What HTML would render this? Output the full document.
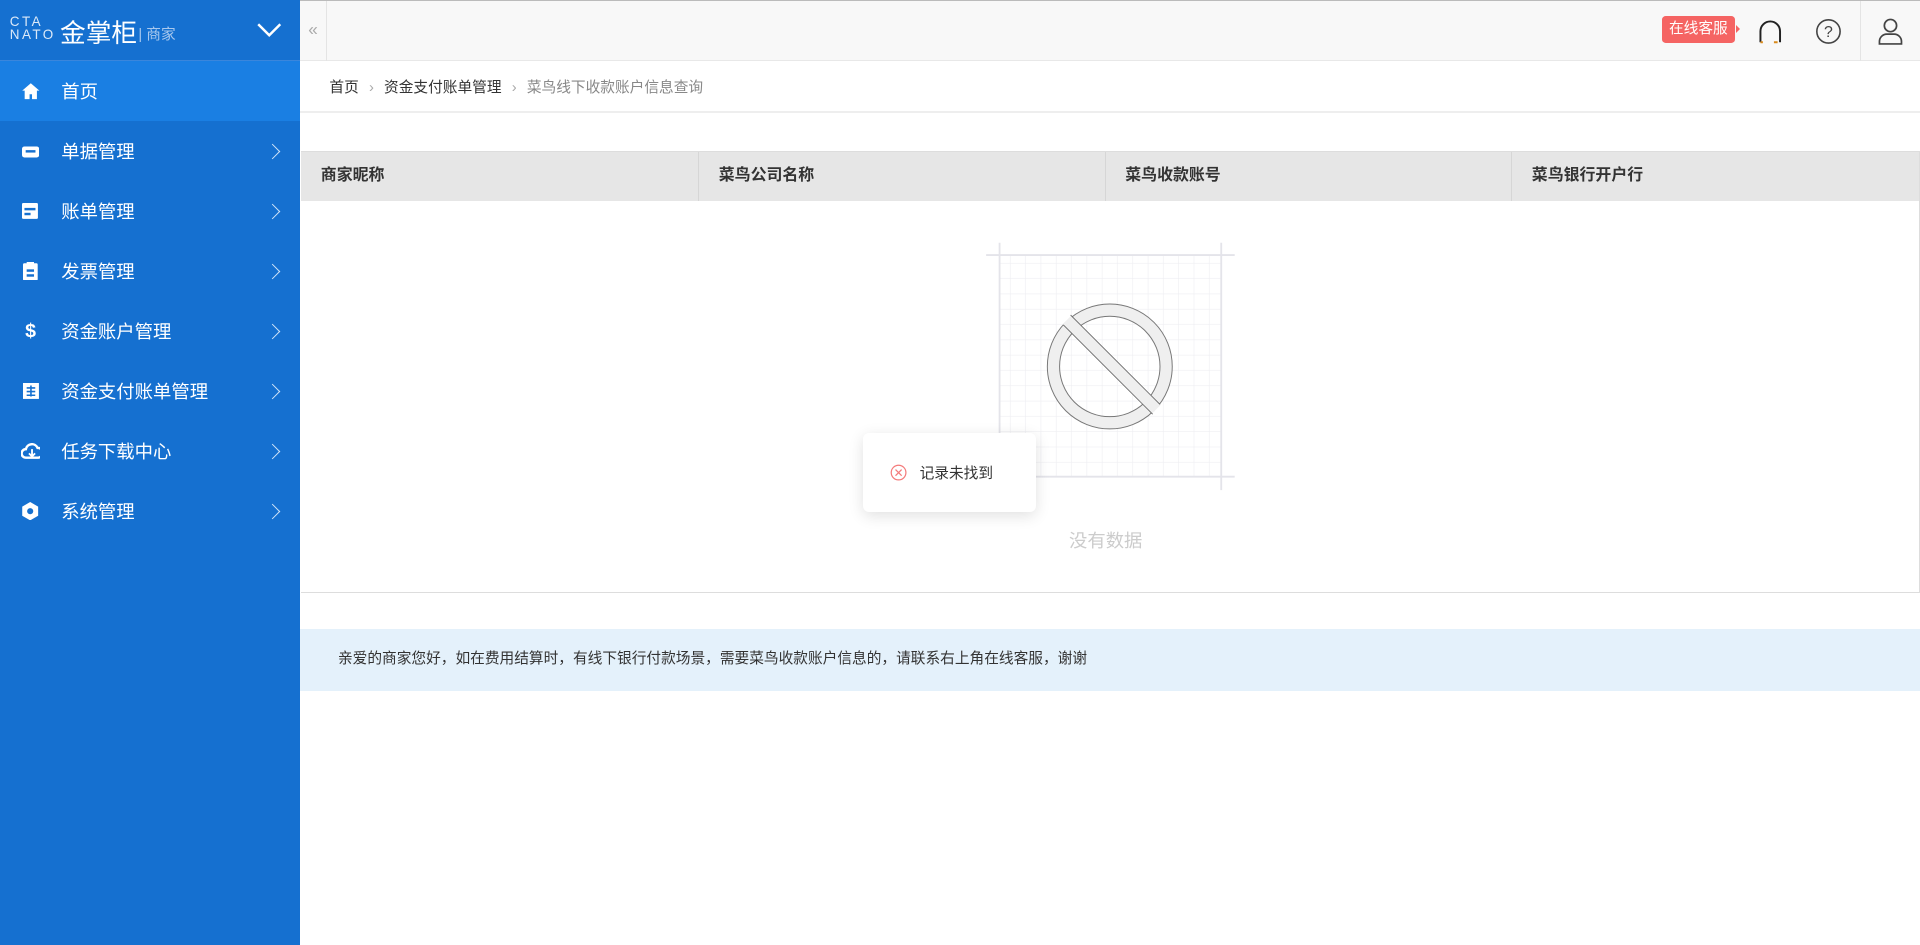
<!DOCTYPE html>
<html><head><meta charset="utf-8"><style>
*{margin:0;padding:0;box-sizing:border-box}
html,body{width:1920px;height:945px;overflow:hidden;background:#fff}
#w{zoom:1.22449;width:1568px;height:772px;position:relative;font-family:"Liberation Sans","Noto Sans CJK SC",sans-serif;color:#333;font-size:13px}
.sb{position:absolute;left:0;top:0;width:245px;height:772px;background:#1570d0}
.logo{height:50px;border-bottom:1px solid #3a86dc;position:relative;color:#fff}
.mi{height:49px;display:flex;align-items:center;color:#fff;font-size:15px;position:relative}
.mi .ic{width:16px;margin:0 17px 0 17px;display:flex;justify-content:center}
.mi .ar{position:absolute;right:18px;top:20px;width:9px;height:9px;border-right:1.5px solid #cfe3f7;border-top:1.5px solid #cfe3f7;transform:rotate(45deg)}
.top{position:absolute;left:245px;top:0;right:0;height:50px;background:#f8f8f8;border-bottom:1px solid #e8e8e8;border-top:1px solid #bbb}
.tbl{position:absolute;left:246px;top:123px;width:1322px;height:361px;border:1px solid #ddd;border-left:none}
.th{height:40px;background:#e6e6e6;display:flex;font-weight:bold;font-size:13px;color:#333}
.th div{border-right:1px solid #d6d6d6;padding-left:16px;line-height:40px}
</style></head><body><div id="w">
<div class="sb">
 <div class="logo">
  <div style="position:absolute;left:8px;top:12px;font-size:11px;line-height:11px;letter-spacing:2px;color:#dce9f8">CTA<br>NATO</div>
  <div style="position:absolute;left:49px;top:11px;font-size:21px">金掌柜</div>
  <div style="position:absolute;left:113px;top:19px;font-size:12px;color:#a8c8ee">| 商家</div>
  <svg style="position:absolute;left:210px;top:19px" width="20" height="12"><path d="M1 1l9 9 9-9" stroke="#fff" stroke-width="2" fill="none"/></svg>
 </div>
 <div class="mi" style="background:#1a7fe3"><span class="ic"><svg width="16" height="15"><path d="M8 1L1 7h2v7h4v-4h2v4h4V7h2z" fill="#fff"/></svg></span>首页</div>
 <div class="mi"><span class="ic"><svg width="14" height="12"><rect x="0" y="2" width="14" height="9" rx="2" fill="#fff"/><rect x="3" y="5" width="8" height="2" fill="#1570d0"/></svg></span>单据管理<span class="ar"></span></div>
 <div class="mi"><span class="ic"><svg width="14" height="13"><rect x="0" y="0" width="13" height="13" rx="1" fill="#fff"/><rect x="2" y="4" width="9" height="2" fill="#1570d0"/><rect x="2" y="8" width="5" height="2" fill="#1570d0"/></svg></span>账单管理<span class="ar"></span></div>
 <div class="mi"><span class="ic"><svg width="12" height="15"><rect x="0" y="1" width="12" height="14" rx="1" fill="#fff"/><rect x="3" y="0" width="6" height="3" fill="#fff"/><rect x="3" y="6" width="6" height="2" fill="#1570d0"/><rect x="3" y="10" width="6" height="2" fill="#1570d0"/></svg></span>发票管理<span class="ar"></span></div>
 <div class="mi"><span class="ic" style="font-weight:bold;font-size:16px">$</span>资金账户管理<span class="ar"></span></div>
 <div class="mi"><span class="ic"><svg width="13" height="13"><rect width="13" height="13" fill="#fff"/><path d="M3 4h7M3 7h7M3 10h7M6.5 2v9" stroke="#1570d0" stroke-width="1.3"/></svg></span>资金支付账单管理<span class="ar"></span></div>
 <div class="mi"><span class="ic"><svg width="18" height="13"><path d="M4 12a3.5 3.5 0 010-7 5 5 0 019.5-1A4 4 0 0114 12z" fill="none" stroke="#fff" stroke-width="2"/><path d="M9 5v6M6.5 8.5L9 11l2.5-2.5" stroke="#fff" stroke-width="1.5" fill="none"/></svg></span>任务下载中心<span class="ar"></span></div>
 <div class="mi"><span class="ic"><svg width="15" height="15"><path d="M7.5 0l6.5 3.75v7.5L7.5 15 1 11.25v-7.5z" fill="#fff"/><circle cx="7.5" cy="7.5" r="2.5" fill="#1570d0"/></svg></span>系统管理<span class="ar"></span></div>
</div>
<div class="top">
 <div style="position:absolute;left:0;top:0;width:22px;height:49px;border-right:1px solid #e4e4e4;color:#aaa;font-size:14px;text-align:center;line-height:46px">«</div>
 <div style="position:absolute;left:1112px;top:12px;background:#f56463;color:#fff;font-size:12px;padding:2px 6px;border-radius:3px;line-height:18px">在线客服</div>
 <div style="position:absolute;left:1173px;top:20px;width:0;height:0;border:4px solid transparent;border-left-color:#f56463"></div>
 <svg style="position:absolute;left:1191px;top:15px" width="20" height="22"><path d="M2 19V10a8 8 0 0116 0v9" fill="none" stroke="#222" stroke-width="1.6"/><path d="M2 19h2M16 19h-3" stroke="#d88a1c" stroke-width="1.6"/></svg>
 <svg style="position:absolute;left:1237px;top:14px" width="22" height="22"><circle cx="11" cy="11" r="9.5" fill="none" stroke="#444" stroke-width="1.3"/><text x="11" y="15.5" font-size="13" text-anchor="middle" fill="#444" font-family="Liberation Sans">?</text></svg>
 <div style="position:absolute;left:1274px;top:0;width:1px;height:49px;background:#e4e4e4"></div>
 <svg style="position:absolute;left:1288px;top:13px" width="22" height="24"><circle cx="11" cy="7" r="5" fill="none" stroke="#444" stroke-width="1.4"/><path d="M2 22v-2a6 6 0 016-6h6a6 6 0 016 6v2z" fill="none" stroke="#444" stroke-width="1.4"/></svg>
</div>
<div style="position:absolute;left:269px;top:62px;font-size:12px;color:#333">首页 <span style="color:#aaa;margin:0 5px">›</span> 资金支付账单管理 <span style="color:#aaa;margin:0 5px">›</span> <span style="color:#888">菜鸟线下收款账户信息查询</span></div>
<div style="position:absolute;left:245px;top:91px;right:0;height:1px;background:#eee"></div>
<div class="tbl">
 <div class="th"><div style="width:325px">商家昵称</div><div style="width:332px">菜鸟公司名称</div><div style="width:332px">菜鸟收款账号</div><div style="flex:1;border:none">菜鸟银行开户行</div></div>
</div>
<svg style="position:absolute;left:800px;top:190px" width="215" height="220">
 <defs><pattern id="g" width="12.5" height="12.5" patternUnits="userSpaceOnUse"><path d="M12.5 0V12.5H0" fill="none" stroke="#eeeef2" stroke-width="1"/></pattern></defs>
 <rect x="16" y="18" width="181" height="181" fill="url(#g)"/>
 <path d="M16 8v202M197 8v202M5 18h203M5 199h203" stroke="#e4e4ea" stroke-width="1.5"/>
 <circle cx="106" cy="109" r="46" fill="none" stroke="#efefef" stroke-width="10"/>
 <circle cx="106" cy="109" r="51" fill="none" stroke="#777" stroke-width="0.8"/>
 <circle cx="106" cy="109" r="41" fill="none" stroke="#777" stroke-width="0.8"/>
 <path d="M71 71l73 73" stroke="#efefef" stroke-width="10"/>
 <path d="M74 67l73 73M68 75l73 73" stroke="#666" stroke-width="0.7"/>
</svg>
<div style="position:absolute;left:705px;top:354px;width:141px;height:64px;background:#fff;border-radius:5px;box-shadow:0 3px 12px rgba(0,0,0,.12);display:flex;align-items:center;padding-left:22px;font-size:12px;color:#333">
 <svg width="14" height="14" style="margin-right:10px"><circle cx="7" cy="7" r="6" fill="none" stroke="#f47a7a"/><path d="M4.5 4.5l5 5M9.5 4.5l-5 5" stroke="#f47a7a"/></svg>记录未找到</div>
<div style="position:absolute;left:873px;top:430px;font-size:15px;color:#ccc">没有数据</div>
<div style="position:absolute;left:245px;top:514px;right:0;height:50px;background:#e4f1fb;font-size:12px;line-height:50px;padding-left:31px;color:#333">亲爱的商家您好，如在费用结算时，有线下银行付款场景，需要菜鸟收款账户信息的，请联系右上角在线客服，谢谢</div>
</div></body></html>
